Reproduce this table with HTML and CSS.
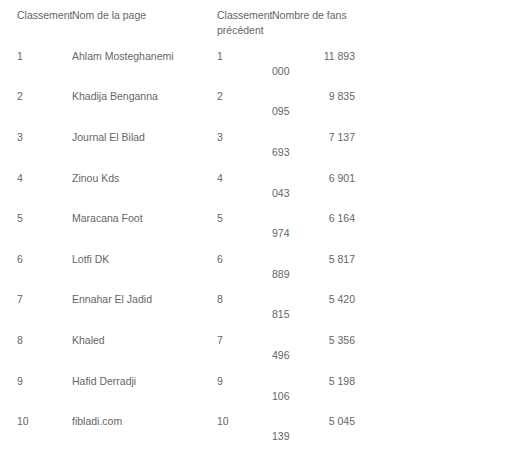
FILE: index.html
```html
<!DOCTYPE html>
<html lang="fr">
<head>
<meta charset="utf-8">
<title>Classement</title>
<link rel="stylesheet" href="styles.css">
</head>
<body>
<table class="rank">
  <colgroup>
    <col class="c-rank"><col class="c-name"><col class="c-prev"><col class="c-fans">
  </colgroup>
  <thead>
    <tr><th>Classement</th><th>Nom de la page</th><th>Classement précédent</th><th>Nombre de fans</th></tr>
  </thead>
  <tbody>
    <tr><td>1</td><td>Ahlam Mosteghanemi</td><td>1</td><td><span class="hi">11 893</span> <span class="lo">000</span></td></tr>
    <tr><td>2</td><td>Khadija Benganna</td><td>2</td><td><span class="hi">9 835</span> <span class="lo">095</span></td></tr>
    <tr><td>3</td><td>Journal El Bilad</td><td>3</td><td><span class="hi">7 137</span> <span class="lo">693</span></td></tr>
    <tr><td>4</td><td>Zinou Kds</td><td>4</td><td><span class="hi">6 901</span> <span class="lo">043</span></td></tr>
    <tr><td>5</td><td>Maracana Foot</td><td>5</td><td><span class="hi">6 164</span> <span class="lo">974</span></td></tr>
    <tr><td>6</td><td>Lotfi DK</td><td>6</td><td><span class="hi">5 817</span> <span class="lo">889</span></td></tr>
    <tr><td>7</td><td>Ennahar El Jadid</td><td>8</td><td><span class="hi">5 420</span> <span class="lo">815</span></td></tr>
    <tr><td>8</td><td>Khaled</td><td>7</td><td><span class="hi">5 356</span> <span class="lo">496</span></td></tr>
    <tr><td>9</td><td>Hafid Derradji</td><td>9</td><td><span class="hi">5 198</span> <span class="lo">106</span></td></tr>
    <tr><td>10</td><td>fibladi.com</td><td>10</td><td><span class="hi">5 045</span> <span class="lo">139</span></td></tr>
  </tbody>
</table>
</body>
</html>
```
FILE: styles.css
```css
html, body {
  margin: 0;
  padding: 0;
  background: #ffffff;
}
body {
  font-family: "Liberation Sans", Arial, sans-serif;
  font-size: 10.5px;
  line-height: 15px;
  color: #666666;
}
.rank {
  margin: 3px 0 0 17px;
  border-collapse: collapse;
  table-layout: fixed;
  width: 338px;
}
.c-rank { width: 55px; }
.c-name { width: 145px; }
.c-prev { width: 55px; }
.c-fans { width: 83px; }
.rank th,
.rank td {
  padding: 5.3px 0;
  text-align: left;
  vertical-align: top;
  font-weight: normal;
  height: 30px;
}
.rank .hi {
  display: block;
  text-align: right;
}
.rank .lo {
  display: block;
  text-align: left;
}
```
